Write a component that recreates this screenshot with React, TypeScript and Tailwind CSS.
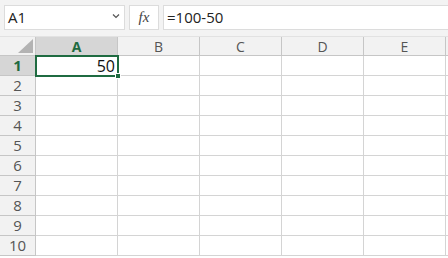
import React from "react";

const cols = ["A", "B", "C", "D", "E"];
const rows = [1, 2, 3, 4, 5, 6, 7, 8, 9, 10];

export default function App() {
  return (
    <div
      className="w-[448px] h-[258px] overflow-hidden bg-white"
      style={{ fontFamily: '"Open Sans", "Liberation Sans", sans-serif' }}
    >
      {/* formula bar */}
      <div className="h-[37px] bg-[#f3f3f3] flex items-start pt-[5px] pl-[4px] gap-[4px] border-b border-[#e2e2e2]">
        <div className="w-[121px] h-[25px] bg-white border border-[#dcdcdc] flex items-center justify-between pl-[3px] pr-[4px]">
          <span className="text-[15px] text-[#222] leading-none">A1</span>
          <svg width="8" height="6" viewBox="0 0 8 6" className="mb-[3px]">
            <path d="M1 1.5 L4 4.5 L7 1.5" fill="none" stroke="#555" strokeWidth="1.2" />
          </svg>
        </div>
        <div className="w-[30px] h-[25px] bg-white border border-[#dcdcdc] flex items-center justify-center">
          <span
            className="text-[15px] italic text-[#444] leading-none"
            style={{ fontFamily: '"Liberation Serif", serif' }}
          >
            fx
          </span>
        </div>
        <div className="flex-1 h-[25px] bg-white border border-[#dcdcdc] border-r-0 flex items-center pl-[3px]">
          <span className="text-[15px] text-[#222] leading-none">=100-50</span>
        </div>
      </div>

      {/* grid */}
      <div className="grid grid-cols-[36px_repeat(5,82px)_40px] grid-rows-[19px_repeat(10,20px)]">
        {/* corner */}
        <div className="bg-[#f2f2f2] border-r border-b border-[#c6c6c6] relative">
          <div
            className="absolute right-[2px] bottom-[2px] w-[15px] h-[14px] bg-[#b3b3b3]"
            style={{ clipPath: "polygon(100% 0, 100% 100%, 0 100%)" }}
          />
        </div>
        {cols.map((c) => (
          <div
            key={c}
            className={
              c === "A"
                ? "bg-[#d6d6d6] border-r border-b border-[#c6c6c6] flex items-center justify-center text-[14px] font-bold text-[#1e6b40]"
                : "bg-[#f2f2f2] border-r border-b border-[#c6c6c6] flex items-center justify-center text-[14px] text-[#555]"
            }
          >
            {c}
          </div>
        ))}
        <div className="bg-[#f2f2f2] border-b border-[#c6c6c6]" />

        {rows.map((r) => (
          <React.Fragment key={r}>
            <div
              className={
                r === 1
                  ? "bg-[#d6d6d6] border-r border-b border-[#c6c6c6] flex items-center justify-center text-[15px] font-bold text-[#1e6b40]"
                  : "bg-[#f2f2f2] border-r border-b border-[#c6c6c6] flex items-center justify-center text-[15px] text-[#555]"
              }
            >
              {r}
            </div>
            {cols.map((c) =>
              r === 1 && c === "A" ? (
                <div key={c} className="relative border-r border-b border-[#d4d4d4]">
                  <div className="absolute -left-[1px] -top-[1px] w-[84px] h-[22px] border-2 border-[#1f6b41] flex items-center justify-end pr-[2px] z-10">
                    <span className="text-[16px] text-[#111] leading-none">50</span>
                    <div className="absolute -right-[4px] -bottom-[4px] w-[6px] h-[6px] bg-[#1f6b41] border border-white" />
                  </div>
                </div>
              ) : (
                <div key={c} className="border-r border-b border-[#d4d4d4]" />
              )
            )}
            <div className="border-b border-[#d4d4d4]" />
          </React.Fragment>
        ))}
      </div>
    </div>
  );
}
